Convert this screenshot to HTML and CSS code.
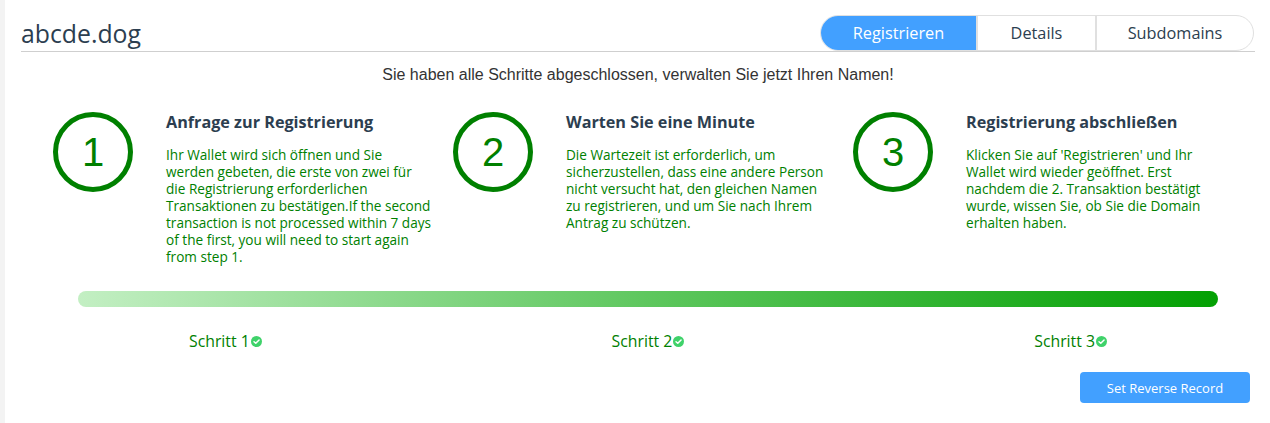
FILE: index.html
```html
<!DOCTYPE html>
<html lang="de">
<head>
<meta charset="utf-8">
<title>abcde.dog</title>
<link rel="stylesheet" href="styles.css">
</head>
<body>
<div class="card">
  <div class="header">
    <h1 class="domain">abcde.dog</h1>
    <div class="tabs">
      <div class="tab tab-reg active">Registrieren</div>
      <div class="tab tab-details">Details</div>
      <div class="tab tab-sub">Subdomains</div>
    </div>
  </div>
  <p class="subtitle">Sie haben alle Schritte abgeschlossen, verwalten Sie jetzt Ihren Namen!</p>
  <div class="steps">
    <div class="step">
      <div class="circle">1</div>
      <div class="step-text">
        <h3>Anfrage zur Registrierung</h3>
        <p>Ihr Wallet wird sich öffnen und Sie werden gebeten, die erste von zwei für die Registrierung erforderlichen Transaktionen zu bestätigen.If the second transaction is not processed within 7 days of the first, you will need to start again from step 1.</p>
      </div>
    </div>
    <div class="step">
      <div class="circle">2</div>
      <div class="step-text">
        <h3>Warten Sie eine Minute</h3>
        <p>Die Wartezeit ist erforderlich, um sicherzustellen, dass eine andere Person nicht versucht hat, den gleichen Namen zu registrieren, und um Sie nach Ihrem Antrag zu schützen.</p>
      </div>
    </div>
    <div class="step">
      <div class="circle">3</div>
      <div class="step-text">
        <h3>Registrierung abschließen</h3>
        <p>Klicken Sie auf 'Registrieren' und Ihr Wallet wird wieder geöffnet. Erst nachdem die 2. Transaktion bestätigt wurde, wissen Sie, ob Sie die Domain erhalten haben.</p>
      </div>
    </div>
  </div>
  <div class="progress"></div>
  <div class="labels">
    <span class="label">Schritt 1<svg class="check" viewBox="0 0 12 12"><circle cx="6" cy="6" r="6" fill="#3fd26a"/><path d="M3.3 6.2 5.2 8 8.8 4.3" fill="none" stroke="#fff" stroke-width="1.6" stroke-linecap="round" stroke-linejoin="round"/></svg></span>
    <span class="label">Schritt 2<svg class="check" viewBox="0 0 12 12"><circle cx="6" cy="6" r="6" fill="#3fd26a"/><path d="M3.3 6.2 5.2 8 8.8 4.3" fill="none" stroke="#fff" stroke-width="1.6" stroke-linecap="round" stroke-linejoin="round"/></svg></span>
    <span class="label">Schritt 3<svg class="check" viewBox="0 0 12 12"><circle cx="6" cy="6" r="6" fill="#3fd26a"/><path d="M3.3 6.2 5.2 8 8.8 4.3" fill="none" stroke="#fff" stroke-width="1.6" stroke-linecap="round" stroke-linejoin="round"/></svg></span>
  </div>
  <div class="actions">
    <button class="btn">Set Reverse Record</button>
  </div>
</div>
</body>
</html>
```
FILE: styles.css
```css
html, body {
  margin: 0;
  padding: 0;
  background: #f3f3f3;
  overflow: hidden;
}
body {
  padding-left: 5px;
  font-family: "Open Sans", "Noto Sans", sans-serif;
  color: #2c3e50;
}
.card {
  background: #fff;
  min-height: 423px;
  padding: 0 15px 0 16px;
  box-sizing: border-box;
}
.header {
  display: flex;
  justify-content: space-between;
  align-items: center;
  padding-top: 15px;
  border-bottom: 1px solid #cfcfcf;
}
.domain {
  margin: 0;
  font-size: 24.8px;
  font-weight: 400;
  line-height: 36px;
  color: #2c3e50;
}
.tabs {
  display: flex;
  border: 1px solid #e0e0e0;
  border-radius: 18px;
  overflow: hidden;
  margin-right: 1px;
}
.tab {
  height: 34px;
  line-height: 34px;
  text-align: center;
  font-size: 16.3px;
  color: #2c3e50;
  box-sizing: border-box;
}
.tab + .tab {
  border-left: 2px solid #e0e0e0;
}
.tab-reg { width: 155px; }
.tab-details { width: 119px; }
.tab-sub { width: 158px; }
.tab.active {
  background: #42a0ff;
  color: #fff;
}
.subtitle {
  margin: 14px 0 0;
  text-align: center;
  font-family: "Liberation Sans", Arial, sans-serif;
  font-size: 16px;
  line-height: 18px;
  color: #333;
}
.steps {
  display: grid;
  grid-template-columns: repeat(3, 400px);
  margin: 28px 0 0 32px;
  height: 153px;
}
.step {
  display: flex;
  gap: 33px;
  align-items: flex-start;
}
.circle {
  flex: none;
  width: 80px;
  height: 80px;
  box-sizing: border-box;
  border: 5px solid #008000;
  border-radius: 50%;
  display: flex;
  align-items: center;
  justify-content: center;
  font-family: "Liberation Sans", Arial, sans-serif;
  font-size: 40px;
  color: #008000;
}
.step-text {
  width: 266px;
}
.step-text h3 {
  margin: 0;
  font-size: 16.2px;
  font-weight: 700;
  line-height: 20px;
  color: #2c3e50;
}
.step-text p {
  margin: 14px 0 0;
  font-size: 13.6px;
  line-height: 17px;
  color: #008000;
}
.progress {
  margin: 26px 0 0 57px;
  width: 1140px;
  height: 16px;
  border-radius: 8px;
  background: linear-gradient(to right, #c3efc3, #5ec75e 50%, #03a003);
}
.labels {
  display: flex;
  justify-content: space-between;
  margin-top: 24px;
  padding: 0 148px 0 168px;
}
.label {
  display: inline-flex;
  align-items: center;
  font-size: 15.8px;
  line-height: 20px;
  color: #008000;
}
.check {
  width: 11px;
  height: 11px;
  margin-left: 1px;
}
.actions {
  display: flex;
  justify-content: flex-end;
  margin-top: 21px;
  padding-right: 5px;
}
.btn {
  width: 170px;
  height: 31px;
  border: none;
  border-radius: 4px;
  background: #42a0ff;
  color: #fff;
  font-family: "Open Sans", "Noto Sans", sans-serif;
  font-size: 13px;
}
```
